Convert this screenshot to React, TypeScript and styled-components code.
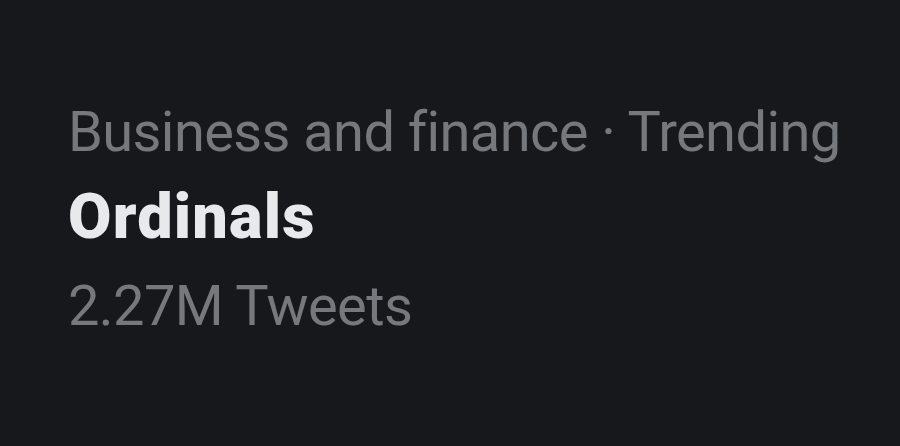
import styled, { createGlobalStyle } from "styled-components";

const GlobalStyle = createGlobalStyle`
  html, body {
    margin: 0;
    padding: 0;
    background: #17181c;
  }
  body {
    font-family: "Roboto", "Liberation Sans", sans-serif;
  }
`;

const App = () => {
  return (
    <>
      <GlobalStyle />
      <Page>
        <Trend>
          <Meta>Business and finance · Trending</Meta>
          <Topic>Ordinals</Topic>
          <Meta>2.27M Tweets</Meta>
        </Trend>
      </Page>
    </>
  );
};

const Page = styled.div`
  width: 900px;
  height: 446px;
  background: #17181c;
  padding: 89px 0 0 68px;
  box-sizing: border-box;
`;

const Trend = styled.div`
  display: flex;
  flex-direction: column;
`;

const Meta = styled.div`
  font-size: 56px;
  line-height: 86px;
  letter-spacing: -0.6px;
  color: #75787c;
  white-space: nowrap;
`;

const Topic = styled.div`
  font-size: 63px;
  line-height: 84px;
  margin-bottom: 4px;
  font-weight: 900;
  letter-spacing: 1.2px;
  color: #e8e9ea;
`;

export default App;
